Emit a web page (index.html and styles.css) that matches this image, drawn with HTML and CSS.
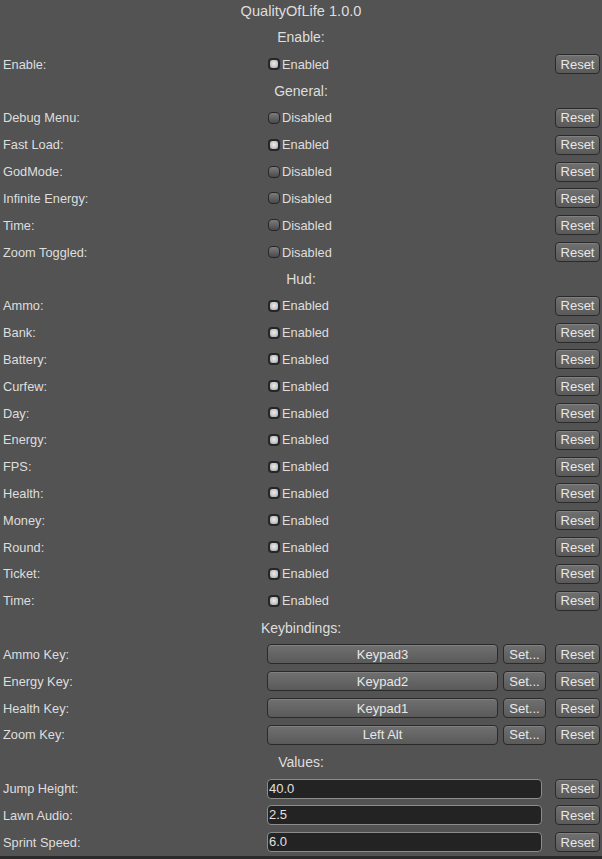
FILE: index.html
```html
<!DOCTYPE html>
<html>
<head>
<meta charset="utf-8">
<link rel="stylesheet" href="styles.css">
</head>
<body>
<div class="window">
  <div class="title">QualityOfLife 1.0.0</div>

  <div class="row head">Enable:</div>
  <div class="row"><span class="label">Enable:</span><span class="toggle on"><i></i>Enabled</span><button class="btn reset">Reset</button></div>

  <div class="row head">General:</div>
  <div class="row"><span class="label">Debug Menu:</span><span class="toggle"><i></i>Disabled</span><button class="btn reset">Reset</button></div>
  <div class="row"><span class="label">Fast Load:</span><span class="toggle on"><i></i>Enabled</span><button class="btn reset">Reset</button></div>
  <div class="row"><span class="label">GodMode:</span><span class="toggle"><i></i>Disabled</span><button class="btn reset">Reset</button></div>
  <div class="row"><span class="label">Infinite Energy:</span><span class="toggle"><i></i>Disabled</span><button class="btn reset">Reset</button></div>
  <div class="row"><span class="label">Time:</span><span class="toggle"><i></i>Disabled</span><button class="btn reset">Reset</button></div>
  <div class="row"><span class="label">Zoom Toggled:</span><span class="toggle"><i></i>Disabled</span><button class="btn reset">Reset</button></div>

  <div class="row head">Hud:</div>
  <div class="row"><span class="label">Ammo:</span><span class="toggle on"><i></i>Enabled</span><button class="btn reset">Reset</button></div>
  <div class="row"><span class="label">Bank:</span><span class="toggle on"><i></i>Enabled</span><button class="btn reset">Reset</button></div>
  <div class="row"><span class="label">Battery:</span><span class="toggle on"><i></i>Enabled</span><button class="btn reset">Reset</button></div>
  <div class="row"><span class="label">Curfew:</span><span class="toggle on"><i></i>Enabled</span><button class="btn reset">Reset</button></div>
  <div class="row"><span class="label">Day:</span><span class="toggle on"><i></i>Enabled</span><button class="btn reset">Reset</button></div>
  <div class="row"><span class="label">Energy:</span><span class="toggle on"><i></i>Enabled</span><button class="btn reset">Reset</button></div>
  <div class="row"><span class="label">FPS:</span><span class="toggle on"><i></i>Enabled</span><button class="btn reset">Reset</button></div>
  <div class="row"><span class="label">Health:</span><span class="toggle on"><i></i>Enabled</span><button class="btn reset">Reset</button></div>
  <div class="row"><span class="label">Money:</span><span class="toggle on"><i></i>Enabled</span><button class="btn reset">Reset</button></div>
  <div class="row"><span class="label">Round:</span><span class="toggle on"><i></i>Enabled</span><button class="btn reset">Reset</button></div>
  <div class="row"><span class="label">Ticket:</span><span class="toggle on"><i></i>Enabled</span><button class="btn reset">Reset</button></div>
  <div class="row"><span class="label">Time:</span><span class="toggle on"><i></i>Enabled</span><button class="btn reset">Reset</button></div>

  <div class="row head">Keybindings:</div>
  <div class="row"><span class="label">Ammo Key:</span><button class="btn key">Keypad3</button><button class="btn set">Set...</button><button class="btn reset">Reset</button></div>
  <div class="row"><span class="label">Energy Key:</span><button class="btn key">Keypad2</button><button class="btn set">Set...</button><button class="btn reset">Reset</button></div>
  <div class="row"><span class="label">Health Key:</span><button class="btn key">Keypad1</button><button class="btn set">Set...</button><button class="btn reset">Reset</button></div>
  <div class="row"><span class="label">Zoom Key:</span><button class="btn key">Left Alt</button><button class="btn set">Set...</button><button class="btn reset">Reset</button></div>

  <div class="row head">Values:</div>
  <div class="row"><span class="label">Jump Height:</span><span class="field">40.0</span><button class="btn reset">Reset</button></div>
  <div class="row"><span class="label">Lawn Audio:</span><span class="field">2.5</span><button class="btn reset">Reset</button></div>
  <div class="row"><span class="label">Sprint Speed:</span><span class="field">6.0</span><button class="btn reset">Reset</button></div>
</div>
</body>
</html>
```

FILE: styles.css
```css
html, body {
  margin: 0;
  padding: 0;
  background: #2a2a2a;
}
body {
  font-family: "Liberation Sans", Arial, sans-serif;
  color: #dedede;
}
.window {
  width: 602px;
  height: 856px;
  background: #535353;
  display: flex;
  flex-direction: column;
  overflow: hidden;
}
.title {
  height: 24px;
  line-height: 23px;
  text-align: center;
  font-size: 14.6px;
  flex: none;
}
.row {
  height: 26.83px;
  flex: none;
  display: flex;
  align-items: center;
  padding: 0 2px 0 3px;
  font-size: 12.8px;
}
.row.head {
  justify-content: center;
  font-size: 14px;
  padding: 0;
}
.label {
  width: 264px;
  flex: none;
}
.toggle {
  display: flex;
  align-items: center;
  flex: 1;
  padding-left: 1px;
}
.toggle i {
  width: 12px;
  height: 12px;
  box-sizing: border-box;
  border-radius: 4px;
  border: 1px solid #262626;
  background: linear-gradient(#7c7c7c, #4a4a4a);
  margin-right: 2px;
}
.toggle.on i {
  border: 2px solid #262626;
  background: radial-gradient(circle at 50% 45%, #ececec 0, #c8c8c8 55%, #8e8e8e 100%);
}
.btn {
  font-family: inherit;
  font-size: 13px;
  color: #e8e8e8;
  height: 20px;
  box-sizing: border-box;
  border: 1px solid #2a2a2a;
  border-radius: 4px;
  background: linear-gradient(#707070, #5a5a5a);
  box-shadow: inset 0 1px 0 rgba(255,255,255,0.12);
  padding: 0;
  margin: 0;
  flex: none;
  line-height: 17px;
}
.reset {
  width: 45px;
  margin-left: auto;
}
.key {
  width: 231px;
}
.set {
  width: 43px;
  margin-left: 5px;
}
.field {
  width: 275px;
  height: 20px;
  box-sizing: border-box;
  border: 1px solid #8c8c8c;
  border-radius: 4px;
  background: #232323;
  color: #e0e0e0;
  padding-left: 1px;
  line-height: 18px;
  font-size: 13px;
}
```
